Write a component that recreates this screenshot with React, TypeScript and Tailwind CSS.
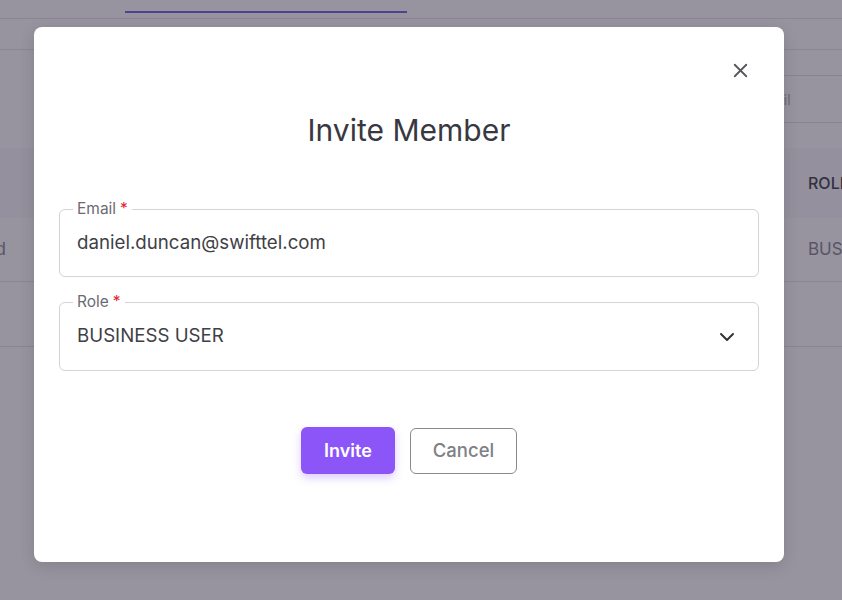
import React from "react";
import { ChevronDown, X } from "lucide-react";

function OutlinedField({
  label,
  heightClass,
  children,
}: {
  label: string;
  heightClass: string;
  children: React.ReactNode;
}) {
  return (
    <div
      className={`relative flex items-center rounded-md border border-[#d4d4d8] pl-[17px] pr-[19px] ${heightClass}`}
    >
      <span className="absolute -top-[10px] left-[13px] bg-white px-1 text-[15.5px] leading-[18px] text-[#6b6b73]">
        {label}
        <span className="ml-[4px] text-[#e11d2e]">*</span>
      </span>
      {children}
    </div>
  );
}

export default function App() {
  return (
    <div className="relative h-[600px] w-[842px] overflow-hidden bg-white font-['Inter','Noto_Sans',sans-serif]">
      {/* underlying page */}
      <div className="flex h-[19px] items-start border-b border-[#e6e6ea] pl-[125px] pt-[11px]">
        <div className="h-[2px] w-[282px] bg-[#7a6ce6]" />
      </div>
      <div className="h-[31px] border-b border-[#e6e6ea]" />
      <div className="flex h-[98px] items-center justify-end">
        <div className="-mr-[90px] flex h-[48px] w-[260px] shrink-0 items-center rounded-md border border-[#e2e2e6] pl-3 text-[14px] text-[#b4b4bb]">
          Search by email
        </div>
      </div>
      <div className="flex h-[70px] items-center bg-[#f9fafb] text-[16px] font-medium text-[#4a4b56]">
        <div className="flex-1" />
        <div className="w-[34px] shrink-0 whitespace-nowrap">ROLE</div>
      </div>
      <div className="flex h-[64px] items-center border-b border-[#e6e6ea] text-[17px] text-[#8e8f99]">
        <div className="-ml-[50px] w-[56px] shrink-0 whitespace-nowrap text-right">Invited</div>
        <div className="flex-1" />
        <div className="w-[34px] shrink-0 whitespace-nowrap">BUSINESS USER</div>
      </div>
      <div className="h-[65px] border-b border-[#e6e6ea]" />

      {/* overlay */}
      <div className="absolute inset-0 flex items-start bg-[#180f2a]/45 pl-[34px] pt-[27px]">
        <div className="flex h-[535px] w-[750px] flex-col rounded-lg bg-white px-[25px] pt-[31px] shadow-[0_4px_16px_rgba(0,0,0,0.12)]">
          <div className="flex justify-end">
            <button className="mr-[7px] flex h-6 w-6 items-center justify-center text-[#55555c]">
              <X size={23} strokeWidth={1.9} />
            </button>
          </div>
          <h2 className="mt-[30px] text-center text-[30px] font-normal leading-9 text-[#383842]">
            Invite Member
          </h2>
          <div className="mt-[61px]">
            <OutlinedField label="Email" heightClass="h-[68px]">
              <span className="text-[18.7px] text-[#3f3f46]">daniel.duncan@swifttel.com</span>
            </OutlinedField>
          </div>
          <div className="mt-[25px]">
            <OutlinedField label="Role" heightClass="h-[69px]">
              <span className="flex-1 text-[18.7px] text-[#3f3f46]">BUSINESS USER</span>
              <ChevronDown size={24} strokeWidth={2} className="text-[#333338]" />
            </OutlinedField>
          </div>
          <div className="mt-[56px] flex items-end justify-center gap-[15px]">
            <button className="flex h-[47px] w-[94px] items-center justify-center rounded-md bg-[#8b55f8] text-[18px] font-semibold text-white shadow-[0_4px_8px_rgba(139,85,248,0.3)]">
              Invite
            </button>
            <button className="flex h-[46px] w-[107px] items-center justify-center rounded-md border border-[#8a8a8e] bg-white text-[18.5px] font-medium text-[#808086]">
              Cancel
            </button>
          </div>
        </div>
      </div>
    </div>
  );
}
